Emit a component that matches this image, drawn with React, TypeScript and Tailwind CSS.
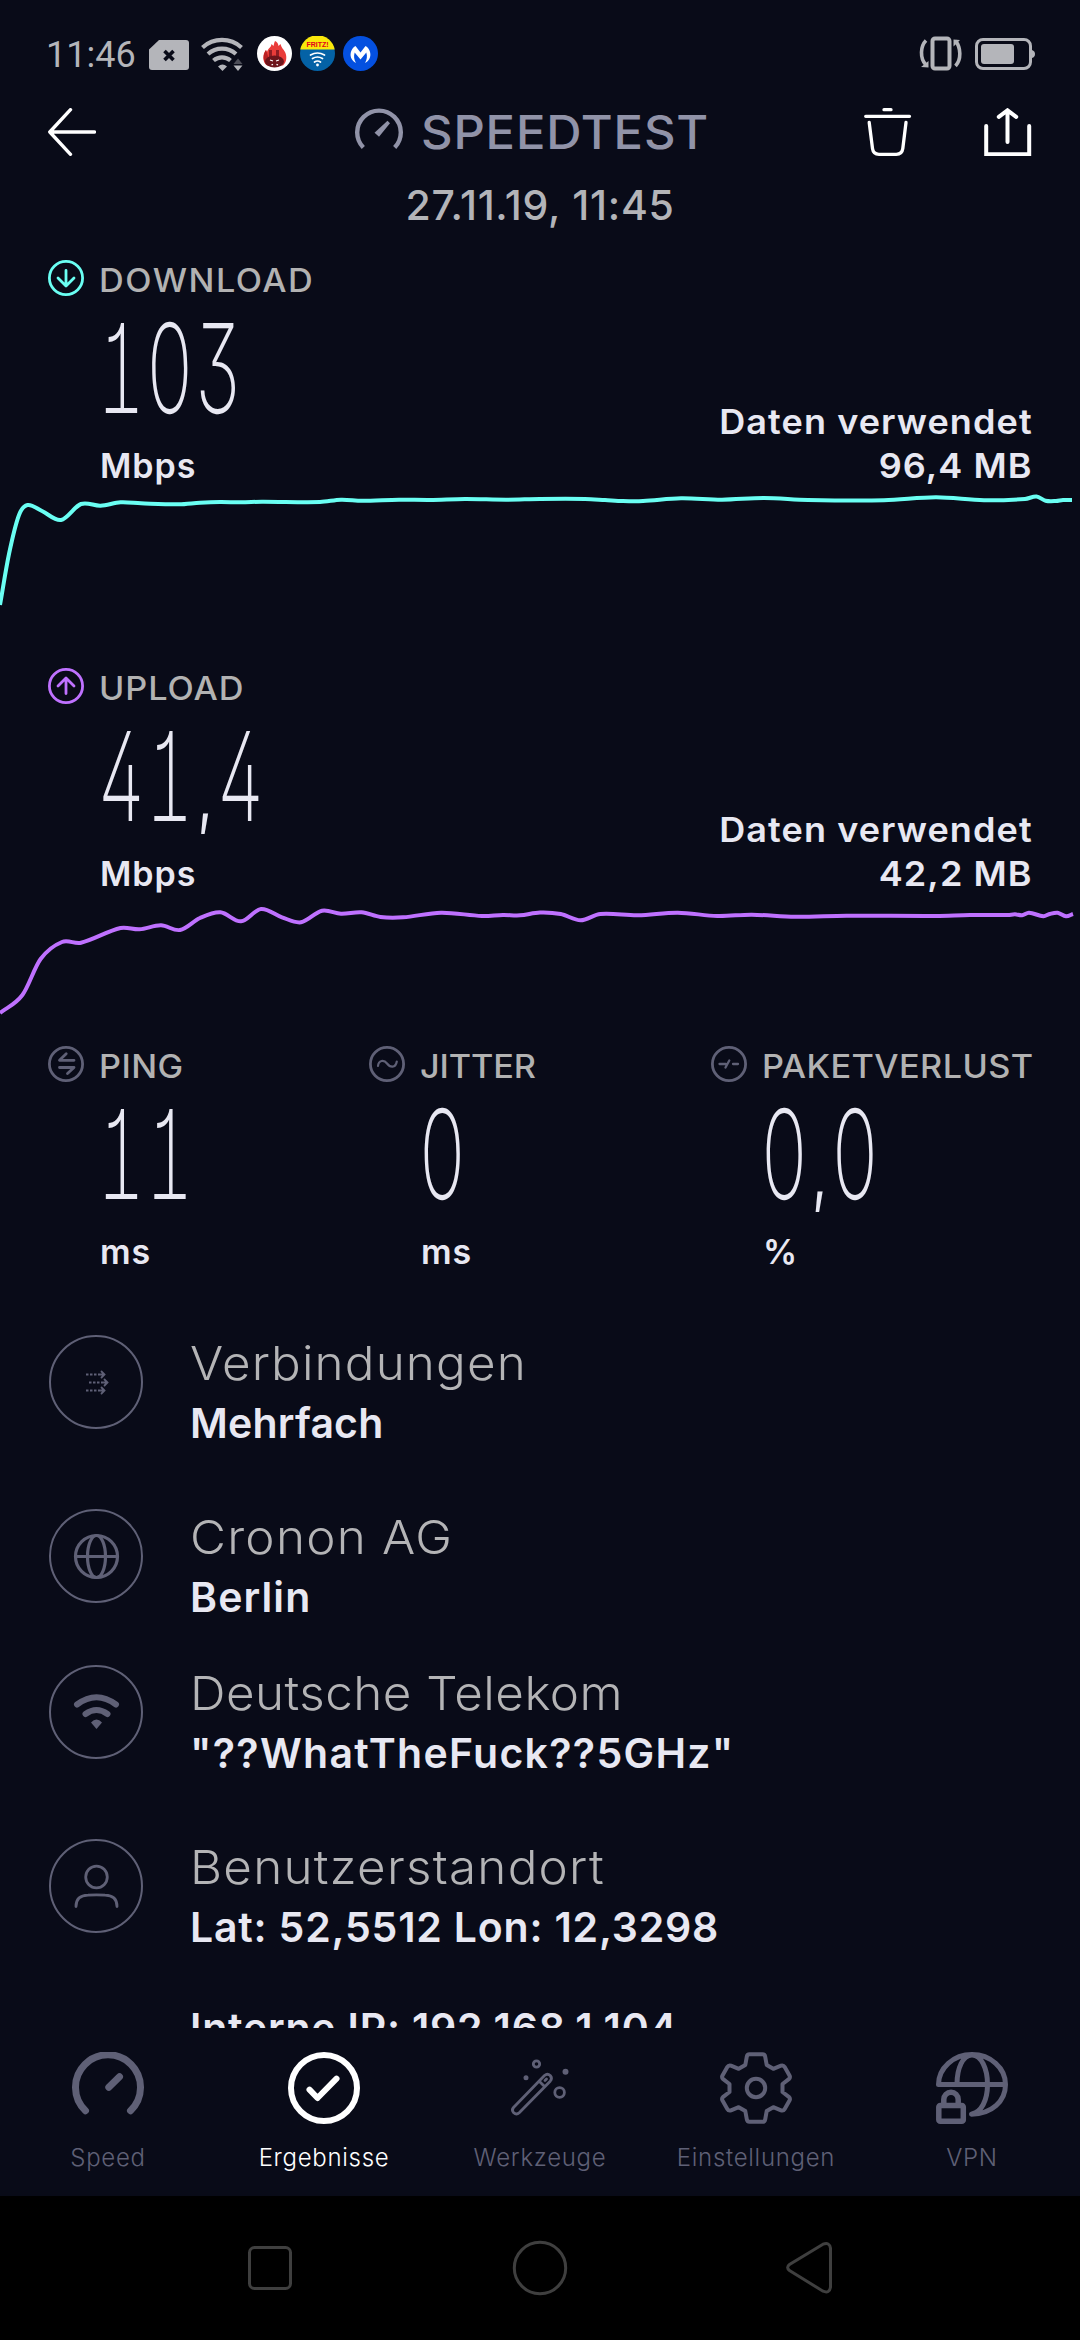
import type { ReactNode } from "react";
import clsx from "clsx";

type Point = [number, number];

const downloadPoints: Point[] = [
  [0, 117], [9, 66], [19, 27], [27.5, 17], [42, 23], [61, 32], [81, 16], [100.5, 17.7], [120.5, 14.3],
  [141, 15.3], [179, 16.3], [200, 14.7], [220, 14], [241, 14.3], [262, 13.7], [320, 14], [341, 11.7],
  [362, 12.7], [399, 11.7], [430, 12], [465, 11], [506, 11.7], [540, 11], [585, 11], [605, 12],
  [623, 13], [643, 13], [681, 10.3], [722, 11.7], [764, 10], [808, 12], [884, 12.3], [936, 9.3],
  [984, 12.3], [1025, 11], [1036.5, 8.5], [1045.5, 12.7], [1056, 13], [1063, 12], [1072, 12],
];

const uploadPoints: Point[] = [
  [0, 117], [22.4, 99], [40.6, 63], [62, 46], [81, 46.7], [120.5, 32], [139.5, 33.3], [161, 29.3],
  [180, 34], [200, 22], [220.4, 16.3], [241, 25.3], [261, 13], [282, 21.3], [301, 26.3], [322, 14.7],
  [341, 17.7], [361.6, 16.3], [380.5, 21], [403, 21.3], [441, 16.7], [482, 20], [503, 19], [520, 19.3],
  [540, 16.5], [560.7, 18], [580.6, 24.3], [600.3, 18], [638, 19.3], [677.7, 16.7], [717.3, 20],
  [751.8, 18.7], [795, 20.7], [846.5, 19.7], [936, 20], [970, 19], [1008, 19], [1015, 18.3],
  [1022, 19.3], [1029, 16.7], [1043.4, 20.3], [1049.6, 18], [1057.6, 16.7], [1066, 20.3], [1073, 18],
];

// Catmull-Rom through all samples, written as cubic beziers
const toPath = (pts: Point[]) =>
  pts.reduce((d, [x, y], i) => {
    if (i === 0) return `M${x} ${y}`;
    const [px, py] = pts[i - 1];
    const before = pts[i - 2] ?? pts[i - 1];
    const after = pts[i + 1] ?? pts[i];
    const dx = (x - px) / 3;
    const m0 = (y - before[1]) / (x - before[0]);
    const m1 = (after[1] - py) / (after[0] - px);
    return `${d}C${px + dx} ${py + m0 * dx} ${x - dx} ${y - m1 * dx} ${x} ${y}`;
  }, "");

const Chart = ({ points, color }: { points: Point[]; color: string }) => (
  <svg className="block h-[150px] w-full" viewBox="0 0 1080 150" fill="none" stroke={color} strokeWidth="4">
    <path d={toPath(points)} strokeLinejoin="round" />
  </svg>
);

const StatusBar = () => (
  <div className="flex h-[84px] shrink-0 items-start justify-between pt-9 pr-[45px] pl-[46px] text-[#b4b5ba]">
    <div className="flex h-[35px] items-center">
      <span className="w-[103px] pt-0.5 font-[Roboto] text-[36px] leading-none">11:46</span>
      <svg className="mt-0.5 h-[30px] w-10" viewBox="0 0 40 30">
        <path d="M10 0h27q3 0 3 3v24q0 3-3 3H3q-3 0-3-3V9.500z" fill="currentColor" />
        <path d="m15.500 11 9 9m0-9-9 9" stroke="#090b18" strokeWidth="3.600" />
      </svg>
      <svg className="ml-3 h-[34px] w-[43px]" viewBox="0 0 43 34" fill="none" stroke="currentColor">
        <path d="M1.500 10.500a29 29 0 0 1 39 0M7 17a21 21 0 0 1 28 0" strokeWidth="4.200" />
        <path d="M12.500 23.500a13 13 0 0 1 17 0" strokeWidth="4.200" />
        <path d="M17 29.500q4.500-4 9 0L21.500 34z" fill="currentColor" stroke="none" />
        <path d="m32.500 27 4.500-5.500 4.500 5.500z" fill="#4b4c56" stroke="none" />
        <path d="M32.500 28.500h9L37 34z" fill="currentColor" stroke="none" />
      </svg>
      <svg className="ml-[13px] size-[35px]" viewBox="0 0 35 35">
        <circle cx="17.500" cy="17.500" r="17.500" fill="#fff" />
        <path d="M18 5c2 1 3 2 3.500 5l2-2c1 4 3 5 4.500 8 2 4 2 10-2 13.500H10C5 26 5.500 18 9 14l1 2c1-4 4-4 4.500-8l2 2c.5-2 .7-3 1.500-5z" fill="#e93c39" />
        <path d="M9 14c-3 4-3.500 11 1 15l3-4-2-5z" fill="#b92224" />
        <path d="M12 14h3v7h-3m7-7h3v7h-3" fill="#8f1c22" />
        <ellipse cx="17.500" cy="25.500" rx="9.500" ry="6" fill="#6d151b" />
        <path d="m13 24 3 1m6-1-3 1m-4.500 4 1.500-.7m5 .7-1.500-.7" stroke="#fff" strokeWidth="1.300" />
      </svg>
      <svg className="ml-2 size-[35px]" viewBox="0 0 35 35">
        <circle cx="17.500" cy="17.500" r="17.500" fill="#0462a6" />
        <path d="M.3 13.500a17.500 17.500 0 0 1 34.400 0z" fill="#fae80b" />
        <text x="17.500" y="10.800" textAnchor="middle" fontFamily="Liberation Sans" fontSize="7" fontWeight="700" fill="#e2001a">
          FRITZ!
        </text>
        <g fill="none" stroke="#fff" strokeWidth="1.700" strokeLinecap="round">
          <path d="M10.500 19q7-4 14 0M12.500 22.500q5-3 10 0M14.500 26q3-2 6 0" />
        </g>
        <circle cx="17.500" cy="29" r="1.400" fill="#fff" />
      </svg>
      <svg className="ml-2 size-[35px]" viewBox="0 0 35 35">
        <circle cx="17.500" cy="17.500" r="17.500" fill="#0450e0" />
        <path
          d="M12.500 10l5 6.500L22.500 10c4.500 2.500 6.500 9 3.500 13.500-1 1.500-2.300 2.500-4 3.500 2-3.500 2.500-7 1.300-10.500L17.500 23.500l-5.800-7c-1.200 3.500-.7 7 1.300 10.500-1.700-1-3-2-4-3.500C6 19 8 12.500 12.500 10z"
          fill="#fff"
        />
      </svg>
    </div>
    <div className="flex h-[35px] items-center gap-3">
      <svg className="h-[35px] w-[44px]" viewBox="0 0 44 35" fill="none" stroke="currentColor">
        <rect x="13.500" y="2.500" width="17" height="30" rx="2.500" strokeWidth="4" />
        <path d="M7 4.500C1.500 10 .5 22 7 29M36.500 30c6-6.500 5.500-18.500 0-25" strokeWidth="3.600" />
        <path d="m2 31 7.500.5V25zM34.500 3.500v7L41 4z" fill="currentColor" stroke="none" />
      </svg>
      <svg className="h-8 w-[60px]" viewBox="0 0 60 32" fill="none">
        <rect x="1.500" y="1.500" width="54" height="29" rx="6.500" stroke="currentColor" strokeWidth="3" />
        <rect x="6" y="6" width="33" height="20" rx="3" fill="currentColor" />
        <path d="M57 12q3 1 3 4t-3 4z" fill="currentColor" />
      </svg>
    </div>
  </div>
);

const Header = () => (
  <div className="flex h-24 items-center px-12">
    <svg className="h-12 w-12" viewBox="0 0 48 48" fill="none" stroke="#fff" strokeWidth="3.400" strokeLinecap="round" strokeLinejoin="round">
      <path d="M22.500 1.700 1.800 24l20.700 22.300M2 24h44.500" />
    </svg>
    <div className="ml-[259px] flex items-center text-[#9193a8]">
      <svg className="size-12" viewBox="0 0 48 48">
        <path d="M8.300 39.500a21.800 21.800 0 1 1 31.400 0" fill="none" stroke="currentColor" strokeWidth="4.400" />
        <path d="m32.500 12.700 2.500 2.600-11 13.500-4.500-4z" fill="currentColor" />
      </svg>
      <span className="-mt-0.5 ml-[18px] origin-left scale-x-[1.04] text-[47px] leading-none font-medium tracking-[0.8px]">SPEEDTEST</span>
    </div>
    <div className="ml-auto flex gap-[72px]">
      <svg className="size-12" viewBox="0 0 48 48" fill="none" stroke="#fff" strokeWidth="3.300" strokeLinecap="round">
        <path d="M1.700 8.300h43.800M20 1.700h7" />
        <path d="m5.200 14.500 3.300 26q.8 5.800 6.500 5.800h17.300q5.700 0 6.500-5.800l3.200-26" />
      </svg>
      <svg className="size-12" viewBox="0 0 48 48" fill="none" stroke="#fff" strokeWidth="4" strokeLinecap="round">
        <path d="M2.200 18v28.300h43V18M23.500 3.500v30.500M14.800 8.800l8.700-6.500 8.700 6.500" />
      </svg>
    </div>
  </div>
);

const Badge = ({ color, children }: { color: string; children: ReactNode }) => (
  <svg className="size-9 shrink-0" viewBox="0 0 36 36" fill="none" stroke={color} strokeWidth="2.800" strokeLinecap="round" strokeLinejoin="round">
    <circle cx="18" cy="18" r="16.600" />
    {children}
  </svg>
);

type MetricProps = {
  icon: ReactNode;
  label: string;
  labelClass: string;
  value: string;
  unit: string;
  className?: string;
};

const Metric = ({ icon, label, labelClass, value, unit, className }: MetricProps) => {
  const [whole, fraction] = value.split(",");

  return (
    <div className={clsx("flex gap-[15px]", className)}>
      {icon}
      <div>
        <p className={clsx("h-9 w-max origin-left scale-x-[1.07] pt-[5px] text-[32px] leading-8 font-medium text-[#b2b2b2]", labelClass)}>
          {label}
        </p>
        <p className="-ml-[2px] h-[148px] w-min origin-left scale-x-[0.605] text-[124px] leading-[144px] font-[250] whitespace-nowrap [font-feature-settings:'tnum','ss01','cv01']">
          {whole}
          {fraction && (
            <>
              <span className="inline-block w-[37px] text-center text-[72px] leading-none font-medium">,</span>
              {fraction}
            </>
          )}
        </p>
        <p className="pl-px text-[34px] leading-[44px] font-semibold tracking-[1px]">{unit}</p>
      </div>
    </div>
  );
};

const DataUsed = ({ amount }: { amount: string }) => (
  <div className="origin-right scale-x-[1.06] text-right text-[34px] leading-[44px] font-[570] tracking-[1px]">
    <p>Daten verwendet</p>
    <p>{amount}</p>
  </div>
);

type DetailProps = {
  title: string;
  value: string;
  className: string;
  titleClass: string;
  valueClass: string;
  children: ReactNode;
};

const Detail = ({ title, value, className, titleClass, valueClass, children }: DetailProps) => (
  <div className={clsx("flex gap-[45px] pl-12", className)}>
    <svg className="size-24 shrink-0" viewBox="0 0 96 96" fill="none" stroke="#5f6076" strokeLinecap="round">
      <circle cx="48" cy="47" r="46" strokeWidth="2" />
      {children}
    </svg>
    <div className="pl-px whitespace-nowrap">
      <p className={clsx("w-max origin-left scale-x-[1.05] text-[47px] leading-[56px] font-[350] text-[#b4b4b6]", titleClass)}>{title}</p>
      <p className={clsx("text-[41px] leading-[64px] font-semibold", valueClass)}>{value}</p>
    </div>
  </div>
);

const Tab = ({ label, active, children }: { label: string; active?: boolean; children: ReactNode }) => (
  <div className={clsx("flex flex-1 flex-col items-center pt-6", active ? "text-white" : "text-[#5f6076]")}>
    <svg className="size-[72px]" viewBox="0 0 72 72" fill="none" stroke="currentColor" strokeLinecap="round" strokeLinejoin="round">
      {children}
    </svg>
    <span className="mt-[18px] text-[24px] leading-8 font-[350] tracking-[0.7px]">{label}</span>
  </div>
);

const TabBar = () => (
  <div className="flex h-[168px] shrink-0">
    <Tab label="Speed">
      <path d="M13.500 58.700a32.500 32.500 0 1 1 45 0M36.800 35.300l10.700-10.600" strokeWidth="7" />
    </Tab>
    <Tab label="Ergebnisse" active>
      <circle cx="36" cy="36" r="33" strokeWidth="6" />
      <path d="m21.500 37.700 8 8.300 19-19.300" strokeWidth="6" />
    </Tab>
    <Tab label="Werkzeuge">
      <g strokeWidth="2.800">
        <path d="m9.500 55.500 31-32q3-2.500 5.700 0 2.500 2.800 0 5.700l-31 31.500q-2.700 2.500-5.500 0-2.500-2.500-.2-5.200zM35 29l5.500 5.500M41 28.500l1.500-1.500" />
        <circle cx="32.500" cy="12" r="3.200" />
        <circle cx="55.600" cy="40.500" r="4.800" />
      </g>
      <g fill="currentColor" stroke="none">
        <circle cx="22" cy="25.700" r="2.500" />
        <circle cx="61.500" cy="19.700" r="3" />
      </g>
    </Tab>
    <Tab label="Einstellungen">
      <path
        d="M29.500 2.200H42.500Q44.800 2.200 45.200 4.700L46.700 13 53.300 16.800 61 13.700Q63.400 12.900 64.700 15.100L69.500 23.500Q70.600 25.600 68.800 27.200L62.500 32V40L68.800 44.800Q70.600 46.400 69.500 48.500L64.700 56.900Q63.400 59.100 61 58.300L53.300 55.200 46.700 59 45.200 67.300Q44.800 69.800 42.500 69.800H29.500Q27.200 69.800 26.800 67.300L25.300 59 18.700 55.200 11 58.300Q8.600 59.100 7.300 56.900L2.500 48.500Q1.400 46.400 3.200 44.800L9.500 40V32L3.200 27.200Q1.400 25.600 2.500 23.500L7.300 15.100Q8.600 12.900 11 13.700L18.700 16.800 25.300 13 26.800 4.700Q27.200 2.200 29.500 2.200Z"
        strokeWidth="4"
      />
      <circle cx="36" cy="36" r="9.200" strokeWidth="4" />
    </Tab>
    <Tab label="VPN">
      <g strokeWidth="5">
        <path d="M2.500 32.500a33.500 30 0 0 1 67 0c0 17-14 29.500-34 29.700M2.500 32.500h67M21 32C21 16 27 3 36 3s15.500 13 15.500 29.500S45 60 36 62" />
        <rect x="2.800" y="53.500" width="24.500" height="15.700" rx="1.500" strokeWidth="5.500" />
        <path d="M7.800 52v-4.500a7.200 7.200 0 0 1 14.400 0V52" strokeWidth="5.500" />
      </g>
    </Tab>
  </div>
);

const SystemNav = () => (
  <div className="flex h-36 shrink-0 items-center justify-center gap-[210px] bg-black">
    <svg className="size-[60px]" viewBox="0 0 60 60" fill="none" stroke="#3f3f3f" strokeWidth="3">
      <rect x="9.500" y="9.500" width="41" height="41" rx="5" />
    </svg>
    <svg className="size-[60px]" viewBox="0 0 60 60" fill="none" stroke="#3f3f3f" strokeWidth="3">
      <circle cx="30" cy="30" r="25.700" />
    </svg>
    <svg className="size-[60px]" viewBox="0 0 60 60" fill="none" stroke="#3f3f3f" strokeWidth="3">
      <path d="M43 6.200 9.500 26.500q-3.800 3 0 6L43 53.200q6.500 2.500 7.500-4v-39q-1-6.500-7.500-4z" />
    </svg>
  </div>
);

export default function App() {
  return (
    <div className="flex h-[2340px] w-[1080px] flex-col overflow-hidden bg-[#090b18] font-[Inter,sans-serif] text-[#e8e8f2]">
      <StatusBar />
      <div className="min-h-0 flex-1 overflow-hidden">
        <Header />
        <p className="mb-[30px] text-center text-[41px] leading-[50px] font-[550] tracking-[0.7px] text-[#b3b4b8]">27.11.19, 11:45</p>

        <div className="flex items-end justify-between pr-[47px] pl-12">
          <Metric
            icon={
              <Badge color="#6afff3">
                <path d="M18 10.500v15M10 18l8 8 8-8" />
              </Badge>
            }
            label="DOWNLOAD"
            labelClass="tracking-[1.400px]"
            value="103"
            unit="Mbps"
          />
          <DataUsed amount="96,4 MB" />
        </div>
        <Chart points={downloadPoints} color="#6afff3" />

        <div className="mt-[30px] flex items-end justify-between pr-[47px] pl-12">
          <Metric
            icon={
              <Badge color="#bf71ff">
                <path d="M18 25.500v-15M10 18l8-8 8 8" />
              </Badge>
            }
            label="UPLOAD"
            labelClass="tracking-[0.900px]"
            value="41,4"
            unit="Mbps"
          />
          <DataUsed amount="42,2 MB" />
        </div>
        <Chart points={uploadPoints} color="#bf71ff" />

        <div className="flex pl-12">
          <Metric
            className="w-[321px]"
            icon={
              <Badge color="#5f6076">
                <path d="M18.200 7.800 11.500 14.300H26M11.500 21.500H26l-6.500 6" />
              </Badge>
            }
            label="PING"
            labelClass="tracking-[0.400px]"
            value="11"
            unit="ms"
          />
          <Metric
            className="w-[342px]"
            icon={
              <Badge color="#5f6076">
                <path d="M9 20c.5-6 6-6.500 9-2.500s8.500 5 9.800-2" strokeWidth="2.200" />
              </Badge>
            }
            label="JITTER"
            labelClass="tracking-[-0.100px]"
            value="0"
            unit="ms"
          />
          <Metric
            icon={
              <Badge color="#5f6076">
                <path d="M8.500 18h6.200M14.500 21.500l3.800-7M22 18h5" strokeWidth="2.300" />
              </Badge>
            }
            label="PAKETVERLUST"
            labelClass="tracking-[0.400px]"
            value="0,0"
            unit="%"
          />
        </div>

        <Detail className="mt-[61px] h-[174px]" title="Verbindungen" value="Mehrfach" titleClass="tracking-[1.100px]" valueClass="tracking-[0.200px]">
          <g strokeWidth="1.800">
            <path d="M38 39.500h15M41 47.500h15M38 55.500h15" strokeDasharray="2.500 1.500" strokeLinecap="butt" />
            <path d="m53.500 36.500 3 3-3 3M56.500 44.500l3 3-3 3M53.500 52.500l3 3-3 3M53 39.500h3M56 47.500h3M53 55.500h3" />
          </g>
        </Detail>
        <Detail className="h-[156px]" title="Cronon AG" value="Berlin" titleClass="tracking-[1.200px]" valueClass="tracking-[1.100px]">
          <g strokeWidth="3.200">
            <circle cx="48.500" cy="47.500" r="21" />
            <ellipse cx="48.500" cy="47.500" rx="9" ry="21" />
            <path d="M28 47.500h41" />
          </g>
        </Detail>
        <Detail
          className="h-[174px]"
          title="Deutsche Telekom"
          value={'"??WhatTheFuck??5GHz"'}
          titleClass="tracking-[0.450px]"
          valueClass="tracking-[1.300px]"
        >
          <path d="M29 39.500q19.500-14.500 39 0" strokeWidth="6" />
          <path d="M37.500 49q11-8 22 0" strokeWidth="6" />
          <path d="M43 57.500q5.500-6 11 0l-5.500 6.500z" fill="#5f6076" stroke="none" />
        </Detail>
        <Detail className="h-[157px]" title="Benutzerstandort" value="Lat: 52,5512 Lon: 12,3298" titleClass="tracking-[1.200px]" valueClass="tracking-[0.800px]">
          <g strokeWidth="2.800">
            <circle cx="48.500" cy="38" r="10.800" />
            <path d="M28 67.500q0-11 12-11.300 8.500-.5 17 0 12 .3 12 11.300" />
          </g>
        </Detail>
        <p className="pl-[190px] text-[41px] leading-[64px] font-semibold tracking-[0.8px]">Interne IP: 192.168.1.104</p>
      </div>
      <TabBar />
      <SystemNav />
    </div>
  );
}
